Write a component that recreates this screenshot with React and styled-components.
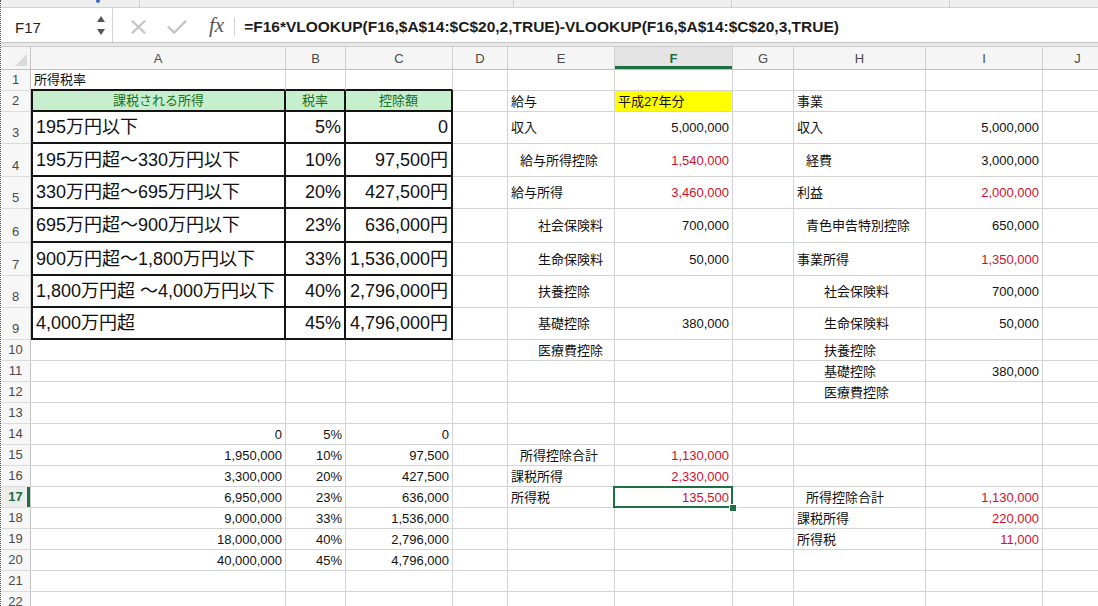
import React from 'react';
import styled, { createGlobalStyle, css } from 'styled-components';

const GREEN = '#1e6f41';
const RED = '#d0112b';
const GRID = '#d3d3d3';

const GlobalStyle = createGlobalStyle`
  html, body { margin: 0; padding: 0; background: #fff; }
  body { overflow: hidden; font-family: "Liberation Sans", "Noto Sans CJK JP", sans-serif; }
  *, *::before, *::after { box-sizing: border-box; }
`;

const Window = styled.div`
  width: 1098px;
  height: 606px;
  overflow: hidden;
  display: flex;
  flex-direction: column;
  background: #fff;
  border-left: 1px dotted #555;
`;

const Ribbon = styled.div`
  flex: 0 0 8px;
  display: flex;
  background: #efefef;
  border-bottom: 1px solid #d2d2d2;
`;

const RibbonGroup = styled.div`
  flex: 0 0 ${p => p.$w}px;
  border-right: 1px solid #cfcfcf;
  position: relative;
`;

const RibbonMark = styled.span`
  position: absolute;
  left: 95px;
  top: 0;
  width: 4px;
  height: 3px;
  border-radius: 0 0 2px 2px;
  background: #3a6fc4;
`;

const FormulaBar = styled.div`
  flex: 0 0 35px;
  display: flex;
  align-items: stretch;
  background: #fff;
  border-bottom: 1px solid #c4c4c4;
`;

const NameBox = styled.div`
  flex: 0 0 112px;
  display: flex;
  align-items: center;
  justify-content: space-between;
  padding: 0 7px 0 14px;
  border-right: 1px solid #d4d4d4;
`;

const NameText = styled.span`
  font-size: 15px;
  color: #222;
  margin-top: 5px;
`;

const Spinner = styled.div`
  display: flex;
  flex-direction: column;
  gap: 7px;
  margin-top: 1px;
`;

const Tri = styled.span`
  width: 0;
  height: 0;
  border-left: 4.5px solid transparent;
  border-right: 4.5px solid transparent;
  ${p => p.$down
    ? css`border-top: 6px solid #555;`
    : css`border-bottom: 6px solid #555;`}
`;

const Tools = styled.div`
  display: flex;
  align-items: center;
  padding-top: 4px;
  flex: 1;
  min-width: 0;
`;

const ToolIcon = styled.svg`
  flex: 0 0 auto;
  margin-left: ${p => p.$ml}px;
  display: block;
`;

const Fx = styled.span`
  margin-left: 22px;
  font-family: "Liberation Serif", serif;
  font-style: italic;
  font-size: 21px;
  line-height: 1;
  color: #555;
  margin-top: -3px;
`;

const ToolDivider = styled.span`
  width: 1px;
  height: 18px;
  margin-left: 10px;
  background: #d2d2d2;
`;

const FormulaText = styled.span`
  margin-left: 9px;
  font-size: 15.5px;
  font-weight: 700;
  color: #1c1c1c;
  white-space: nowrap;
`;

const GapBar = styled.div`
  flex: 0 0 4px;
  background: #e8e8e8;
  border-bottom: 1px solid #cdcdcd;
`;

const COLS = [
  { key: 'A', w: 255 },
  { key: 'B', w: 60 },
  { key: 'C', w: 107 },
  { key: 'D', w: 55 },
  { key: 'E', w: 107 },
  { key: 'F', w: 118 },
  { key: 'G', w: 61 },
  { key: 'H', w: 132 },
  { key: 'I', w: 117 },
  { key: 'J', w: 70 },
];

const Sheet = styled.div`
  flex: 1;
  display: grid;
  grid-template-columns: 30px ${p => p.$cols};
  grid-template-rows: 23px ${p => p.$rows};
  overflow: hidden;
  align-content: start;
`;

const headBase = css`
  background: #f5f5f5;
  font-family: "Liberation Sans", sans-serif;
  font-size: 13px;
  color: #4a4a4a;
  display: flex;
  justify-content: center;
`;

const Corner = styled.div`
  ${headBase};
  position: relative;
  border-right: 1px solid #c6c6c6;
  border-bottom: 1px solid #c0c0c0;
`;

const CornerTri = styled.span`
  position: absolute;
  right: 3px;
  bottom: 3px;
  width: 0;
  height: 0;
  border-left: 12px solid transparent;
  border-bottom: 12px solid #d9d9d9;
`;

const ColHead = styled.div`
  ${headBase};
  align-items: center;
  border-right: 1px solid #cfcfcf;
  border-bottom: 1px solid #c0c0c0;
  ${p => p.$active && css`
    background: #e4e4e4;
    color: ${GREEN};
    font-weight: 700;
    box-shadow: inset 0 -3px 0 ${GREEN};
  `}
`;

const RowHead = styled.div`
  ${headBase};
  align-items: flex-end;
  line-height: 20px;
  background: #f7f7f7;
  border-right: 1px solid #c6c6c6;
  border-bottom: 1px solid #dcdcdc;
  ${p => p.$active && css`
    color: ${GREEN};
    font-weight: 700;
    background: #ececec;
    box-shadow: inset -3px 0 0 ${GREEN};
  `}
`;

const TABLE_LINE = '2px solid #141414';

const Cell = styled.div`
  position: relative;
  display: flex;
  align-items: center;
  justify-content: ${p => (p.$align === 'right' ? 'flex-end' : p.$align === 'center' ? 'center' : 'flex-start')};
  padding: 0 3px 0 ${p => 3 + (p.$indent || 0) * 9}px;
  border-right: 1px solid ${GRID};
  border-bottom: 1px solid ${GRID};
  font-family: "Liberation Sans", "Noto Sans CJK JP", sans-serif;
  font-size: ${p => (p.$big ? 18 : 13)}px;
  line-height: 1;
  color: ${p => (p.$red ? RED : p.$hd ? '#1d6e22' : '#111')};
  background: ${p => p.$fill || (p.$hd ? '#c6efce' : 'transparent')};
  white-space: nowrap;
  ${p => p.$boxRight && css`border-right: ${TABLE_LINE};`}
  ${p => p.$boxBottom && css`border-bottom: ${TABLE_LINE};`}
  ${p => p.$boxLeft && css`border-left: ${TABLE_LINE};`}
  ${p => p.$selected && css`
    z-index: 2;
    &::after {
      content: '';
      position: absolute;
      left: -2px;
      top: -1px;
      right: -1px;
      bottom: -1px;
      border: 2px solid ${GREEN};
      pointer-events: none;
    }
  `}
`;

const FillHandle = styled.span`
  position: absolute;
  right: -5px;
  bottom: -5px;
  width: 8px;
  height: 8px;
  background: ${GREEN};
  border: 1px solid #fff;
  z-index: 3;
`;

const L = (t, o = {}) => ({ t, ...o });
const N = (t, o = {}) => ({ t, al: 'right', ...o });

const ROWS = [
  { h: 21, c: { A: L('所得税率') } },
  {
    h: 21,
    c: {
      A: L('課税される所得', { al: 'center', hd: true }),
      B: L('税率', { al: 'center', hd: true }),
      C: L('控除額', { al: 'center', hd: true }),
      E: L('給与'),
      F: L('平成27年分', { fill: '#ffff00' }),
      H: L('事業'),
    },
  },
  {
    h: 32,
    c: {
      A: L('195万円以下', { big: true }),
      B: N('5%', { big: true }),
      C: N('0', { big: true }),
      E: L('収入'),
      F: N('5,000,000'),
      H: L('収入'),
      I: N('5,000,000'),
    },
  },
  {
    h: 33,
    c: {
      A: L('195万円超〜330万円以下', { big: true }),
      B: N('10%', { big: true }),
      C: N('97,500円', { big: true }),
      E: L('給与所得控除', { ind: 1 }),
      F: N('1,540,000', { red: true }),
      H: L('経費', { ind: 1 }),
      I: N('3,000,000'),
    },
  },
  {
    h: 32,
    c: {
      A: L('330万円超〜695万円以下', { big: true }),
      B: N('20%', { big: true }),
      C: N('427,500円', { big: true }),
      E: L('給与所得'),
      F: N('3,460,000', { red: true }),
      H: L('利益'),
      I: N('2,000,000', { red: true }),
    },
  },
  {
    h: 34,
    c: {
      A: L('695万円超〜900万円以下', { big: true }),
      B: N('23%', { big: true }),
      C: N('636,000円', { big: true }),
      E: L('社会保険料', { ind: 3 }),
      F: N('700,000'),
      H: L('青色申告特別控除', { ind: 1 }),
      I: N('650,000'),
    },
  },
  {
    h: 33,
    c: {
      A: L('900万円超〜1,800万円以下', { big: true }),
      B: N('33%', { big: true }),
      C: N('1,536,000円', { big: true }),
      E: L('生命保険料', { ind: 3 }),
      F: N('50,000'),
      H: L('事業所得'),
      I: N('1,350,000', { red: true }),
    },
  },
  {
    h: 32,
    c: {
      A: L('1,800万円超 〜4,000万円以下', { big: true }),
      B: N('40%', { big: true }),
      C: N('2,796,000円', { big: true }),
      E: L('扶養控除', { ind: 3 }),
      H: L('社会保険料', { ind: 3 }),
      I: N('700,000'),
    },
  },
  {
    h: 32,
    c: {
      A: L('4,000万円超', { big: true }),
      B: N('45%', { big: true }),
      C: N('4,796,000円', { big: true }),
      E: L('基礎控除', { ind: 3 }),
      F: N('380,000'),
      H: L('生命保険料', { ind: 3 }),
      I: N('50,000'),
    },
  },
  { h: 21, c: { E: L('医療費控除', { ind: 3 }), H: L('扶養控除', { ind: 3 }) } },
  { h: 21, c: { H: L('基礎控除', { ind: 3 }), I: N('380,000') } },
  { h: 21, c: { H: L('医療費控除', { ind: 3 }) } },
  { h: 21, c: {} },
  { h: 21, c: { A: N('0'), B: N('5%'), C: N('0') } },
  {
    h: 21,
    c: {
      A: N('1,950,000'),
      B: N('10%'),
      C: N('97,500'),
      E: L('所得控除合計', { ind: 1 }),
      F: N('1,130,000', { red: true }),
    },
  },
  {
    h: 21,
    c: {
      A: N('3,300,000'),
      B: N('20%'),
      C: N('427,500'),
      E: L('課税所得'),
      F: N('2,330,000', { red: true }),
    },
  },
  {
    h: 21,
    c: {
      A: N('6,950,000'),
      B: N('23%'),
      C: N('636,000'),
      E: L('所得税'),
      F: N('135,500', { red: true, sel: true }),
      H: L('所得控除合計', { ind: 1 }),
      I: N('1,130,000', { red: true }),
    },
  },
  {
    h: 21,
    c: {
      A: N('9,000,000'),
      B: N('33%'),
      C: N('1,536,000'),
      H: L('課税所得'),
      I: N('220,000', { red: true }),
    },
  },
  {
    h: 21,
    c: {
      A: N('18,000,000'),
      B: N('40%'),
      C: N('2,796,000'),
      H: L('所得税'),
      I: N('11,000', { red: true }),
    },
  },
  { h: 21, c: { A: N('40,000,000'), B: N('45%'), C: N('4,796,000') } },
  { h: 21, c: {} },
  { h: 21, c: {} },
];

const TABLE_COLS = ['A', 'B', 'C'];

export default function App() {
  const colTpl = COLS.map(c => `${c.w}px`).join(' ');
  const rowTpl = ROWS.map(r => `${r.h}px`).join(' ');
  return (
    <>
      <GlobalStyle />
      <Window>
        <Ribbon>
          <RibbonGroup $w={139}><RibbonMark /></RibbonGroup>
          <RibbonGroup $w={374} />
          <RibbonGroup $w={218} />
          <RibbonGroup $w={218} />
        </Ribbon>
        <FormulaBar>
          <NameBox>
            <NameText>F17</NameText>
            <Spinner>
              <Tri />
              <Tri $down />
            </Spinner>
          </NameBox>
          <Tools>
            <ToolIcon $ml={18} width="15" height="14" viewBox="0 0 15 14">
              <path d="M1.5 1.2 L13.5 12.8 M13.5 1.2 L1.5 12.8" stroke="#c3c3c3" strokeWidth="2.2" strokeLinecap="round" fill="none" />
            </ToolIcon>
            <ToolIcon $ml={21} width="20" height="14" viewBox="0 0 20 14">
              <path d="M1.5 7 L7.2 12.6 L18.5 1.3" stroke="#c3c3c3" strokeWidth="2.2" strokeLinecap="round" strokeLinejoin="round" fill="none" />
            </ToolIcon>
            <Fx>fx</Fx>
            <ToolDivider />
            <FormulaText>=F16*VLOOKUP(F16,$A$14:$C$20,2,TRUE)-VLOOKUP(F16,$A$14:$C$20,3,TRUE)</FormulaText>
          </Tools>
        </FormulaBar>
        <GapBar />
        <Sheet $cols={colTpl} $rows={rowTpl}>
          <Corner><CornerTri /></Corner>
          {COLS.map(col => (
            <ColHead key={col.key} $active={col.key === 'F'}>{col.key}</ColHead>
          ))}
          {ROWS.map((row, ri) => (
            <React.Fragment key={ri}>
              <RowHead $active={ri === 16}>{ri + 1}</RowHead>
              {COLS.map(col => {
                const d = row.c[col.key] || {};
                const inTableCol = TABLE_COLS.includes(col.key);
                const inTable = inTableCol && ri >= 1 && ri <= 8;
                return (
                  <Cell
                    key={col.key}
                    $align={d.al}
                    $indent={d.ind}
                    $big={d.big}
                    $red={d.red}
                    $hd={d.hd}
                    $fill={d.fill}
                    $selected={d.sel}
                    $boxRight={inTable}
                    $boxBottom={inTable || (inTableCol && ri === 0)}
                    $boxLeft={inTable && col.key === 'A'}
                  >
                    {d.t}
                    {d.sel && <FillHandle />}
                  </Cell>
                );
              })}
            </React.Fragment>
          ))}
        </Sheet>
      </Window>
    </>
  );
}
